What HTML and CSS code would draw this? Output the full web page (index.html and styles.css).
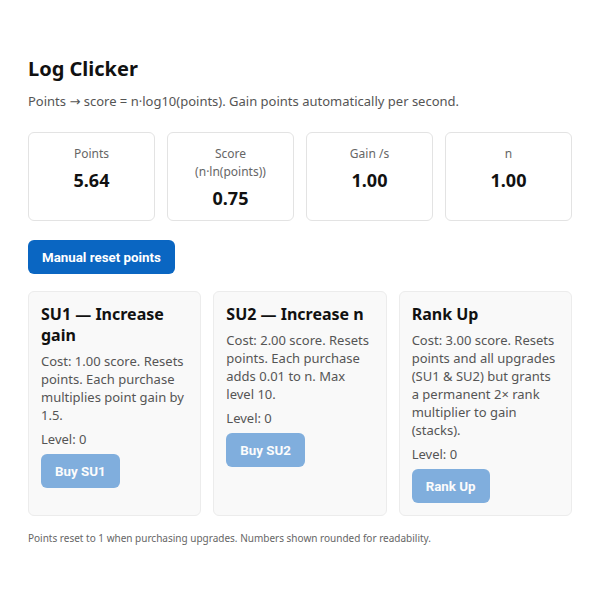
FILE: index.html
```html
<!DOCTYPE html>
<html lang="en">
<head>
<meta charset="utf-8">
<title>Log Clicker</title>
<link rel="stylesheet" href="styles.css">
</head>
<body>
<main class="app">
  <h1 class="title">Log Clicker</h1>
  <p class="subtitle">Points → score = n·log10(points). Gain points automatically per second.</p>

  <section class="stats">
    <div class="stat">
      <div class="stat-label">Points</div>
      <div class="stat-value">5.64</div>
    </div>
    <div class="stat">
      <div class="stat-label">Score (n·ln(points))</div>
      <div class="stat-value">0.75</div>
    </div>
    <div class="stat">
      <div class="stat-label">Gain /s</div>
      <div class="stat-value">1.00</div>
    </div>
    <div class="stat">
      <div class="stat-label">n</div>
      <div class="stat-value">1.00</div>
    </div>
  </section>

  <div class="actions">
    <button class="btn">Manual reset points</button>
  </div>

  <section class="upgrades">
    <div class="upgrade">
      <h2 class="upgrade-title">SU1 — Increase gain</h2>
      <p class="upgrade-desc">Cost: 1.00 score. Resets points. Each purchase multiplies point gain by 1.5.</p>
      <p class="upgrade-level">Level: 0</p>
      <button class="btn" disabled>Buy SU1</button>
    </div>
    <div class="upgrade">
      <h2 class="upgrade-title">SU2 — Increase n</h2>
      <p class="upgrade-desc">Cost: 2.00 score. Resets points. Each purchase adds 0.01 to n. Max level 10.</p>
      <p class="upgrade-level">Level: 0</p>
      <button class="btn" disabled>Buy SU2</button>
    </div>
    <div class="upgrade">
      <h2 class="upgrade-title">Rank Up</h2>
      <p class="upgrade-desc">Cost: 3.00 score. Resets points and all upgrades (SU1 &amp; SU2) but grants a permanent 2× rank multiplier to gain (stacks).</p>
      <p class="upgrade-level">Level: 0</p>
      <button class="btn" disabled>Rank Up</button>
    </div>
  </section>

  <p class="footnote">Points reset to 1 when purchasing upgrades. Numbers shown rounded for readability.</p>
</main>
</body>
</html>
```

FILE: styles.css
```css
* { box-sizing: border-box; }

html, body {
  margin: 0;
  padding: 0;
  background: #ffffff;
}

body {
  font-family: "Noto Sans", "DejaVu Sans", sans-serif;
  color: #111111;
}

.app {
  padding: 55px 28px 28px;
}

.title {
  margin: 0;
  font-size: 20px;
  font-weight: 700;
  line-height: 27px;
}

.subtitle {
  margin: 10px 0 0;
  font-size: 13px;
  line-height: 18px;
  color: #555555;
}

.stats {
  margin-top: 22px;
  display: grid;
  grid-template-columns: repeat(4, 1fr);
  gap: 12px;
}

.stat {
  border: 1px solid #e3e3e3;
  border-radius: 6px;
  padding: 12px;
  text-align: center;
  background: #ffffff;
}

.stat-label {
  font-size: 12px;
  line-height: 18px;
  color: #666666;
}

.stat-value {
  margin-top: 7px;
  font-size: 18px;
  line-height: 20px;
  font-weight: 700;
}

.actions {
  margin-top: 19px;
}

.btn {
  font-family: Roboto, "Liberation Sans", sans-serif;
  font-size: 13.333px;
  font-weight: 700;
  color: #ffffff;
  background: #0a66c2;
  border: none;
  border-radius: 6px;
  height: 34px;
  padding: 0 14px;
  cursor: pointer;
}

.btn:disabled {
  opacity: 0.5;
  cursor: default;
}

.upgrades {
  margin-top: 17px;
  display: grid;
  grid-template-columns: repeat(3, 1fr);
  gap: 12px;
}

.upgrade {
  background: #f9f9f9;
  border: 1px solid #ececec;
  border-radius: 6px;
  padding: 12px;
}

.upgrade-title {
  margin: 0;
  font-size: 16px;
  line-height: 21px;
  font-weight: 700;
}

.upgrade-desc {
  margin: 6px 0 0;
  font-size: 13px;
  line-height: 18px;
  color: #555555;
}

.upgrade-level {
  margin: 6px 0;
  font-size: 13px;
  line-height: 18px;
  color: #555555;
}

.footnote {
  margin: 15px 0 0;
  font-size: 10px;
  line-height: 15px;
  color: #666666;
}
```
